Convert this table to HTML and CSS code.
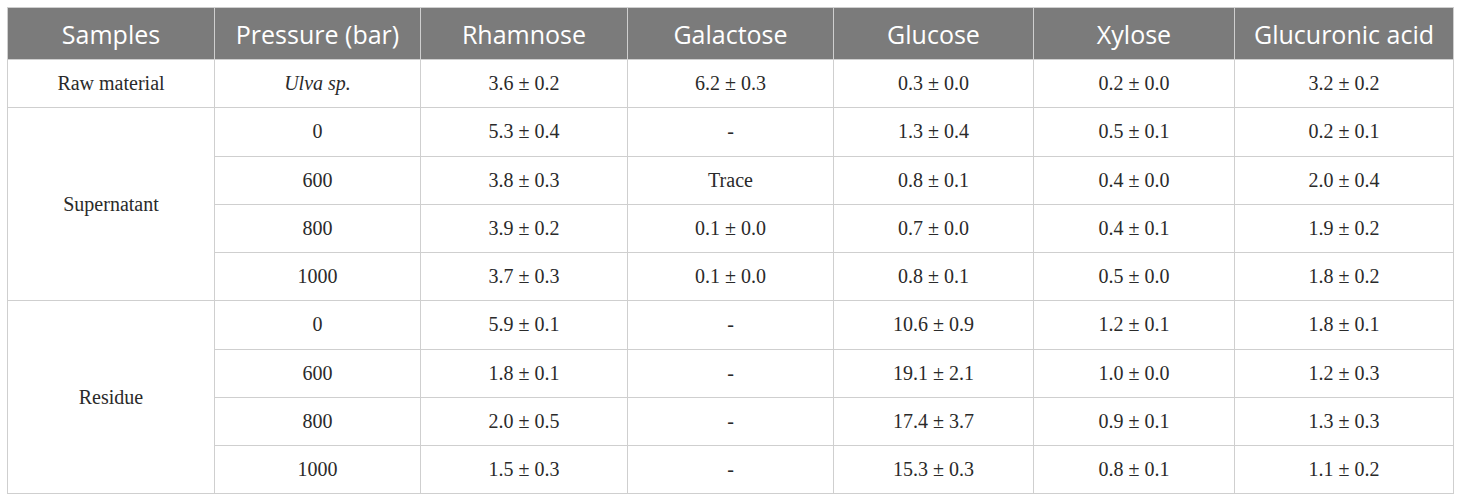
FILE: index.html
```html
<!DOCTYPE html>
<html>
<head>
<meta charset="utf-8">
<link rel="stylesheet" href="styles.css">
</head>
<body>
<table class="data">
  <colgroup>
    <col class="c1"><col class="c2"><col class="c3"><col class="c4"><col class="c5"><col class="c6"><col class="c7">
  </colgroup>
  <thead>
    <tr>
      <th>Samples</th>
      <th>Pressure (bar)</th>
      <th>Rhamnose</th>
      <th>Galactose</th>
      <th>Glucose</th>
      <th>Xylose</th>
      <th>Glucuronic acid</th>
    </tr>
  </thead>
  <tbody>
    <tr>
      <td>Raw material</td>
      <td><i>Ulva sp.</i></td>
      <td>3.6 ± 0.2</td>
      <td>6.2 ± 0.3</td>
      <td>0.3 ± 0.0</td>
      <td>0.2 ± 0.0</td>
      <td>3.2 ± 0.2</td>
    </tr>
    <tr>
      <td rowspan="4">Supernatant</td>
      <td>0</td>
      <td>5.3 ± 0.4</td>
      <td>-</td>
      <td>1.3 ± 0.4</td>
      <td>0.5 ± 0.1</td>
      <td>0.2 ± 0.1</td>
    </tr>
    <tr>
      <td>600</td>
      <td>3.8 ± 0.3</td>
      <td>Trace</td>
      <td>0.8 ± 0.1</td>
      <td>0.4 ± 0.0</td>
      <td>2.0 ± 0.4</td>
    </tr>
    <tr>
      <td>800</td>
      <td>3.9 ± 0.2</td>
      <td>0.1 ± 0.0</td>
      <td>0.7 ± 0.0</td>
      <td>0.4 ± 0.1</td>
      <td>1.9 ± 0.2</td>
    </tr>
    <tr>
      <td>1000</td>
      <td>3.7 ± 0.3</td>
      <td>0.1 ± 0.0</td>
      <td>0.8 ± 0.1</td>
      <td>0.5 ± 0.0</td>
      <td>1.8 ± 0.2</td>
    </tr>
    <tr>
      <td rowspan="4">Residue</td>
      <td>0</td>
      <td>5.9 ± 0.1</td>
      <td>-</td>
      <td>10.6 ± 0.9</td>
      <td>1.2 ± 0.1</td>
      <td>1.8 ± 0.1</td>
    </tr>
    <tr>
      <td>600</td>
      <td>1.8 ± 0.1</td>
      <td>-</td>
      <td>19.1 ± 2.1</td>
      <td>1.0 ± 0.0</td>
      <td>1.2 ± 0.3</td>
    </tr>
    <tr>
      <td>800</td>
      <td>2.0 ± 0.5</td>
      <td>-</td>
      <td>17.4 ± 3.7</td>
      <td>0.9 ± 0.1</td>
      <td>1.3 ± 0.3</td>
    </tr>
    <tr>
      <td>1000</td>
      <td>1.5 ± 0.3</td>
      <td>-</td>
      <td>15.3 ± 0.3</td>
      <td>0.8 ± 0.1</td>
      <td>1.1 ± 0.2</td>
    </tr>
  </tbody>
</table>
</body>
</html>
```

FILE: styles.css
```css
html, body {
  margin: 0;
  background: #ffffff;
}
body {
  padding: 7px 7px 0 7px;
}
.data {
  border-collapse: collapse;
  table-layout: fixed;
  width: 1446px;
}
.c1 { width: 207px; }
.c2 { width: 206px; }
.c3 { width: 207px; }
.c4 { width: 206px; }
.c5 { width: 200px; }
.c6 { width: 201px; }
.c7 { width: 219px; }
.data th,
.data td {
  border: 1px solid #cfcfcf;
  text-align: center;
  vertical-align: middle;
  padding: 0;
}
.data th {
  background: #7b7b7b;
  color: #ffffff;
  font-family: "Open Sans", "Noto Sans", sans-serif;
  font-size: 25px;
  font-weight: 400;
  height: 51px;
}
.data td {
  font-family: "Liberation Serif", "Times New Roman", serif;
  font-size: 20px;
  color: #2a2a2a;
  height: 47.25px;
}
```
